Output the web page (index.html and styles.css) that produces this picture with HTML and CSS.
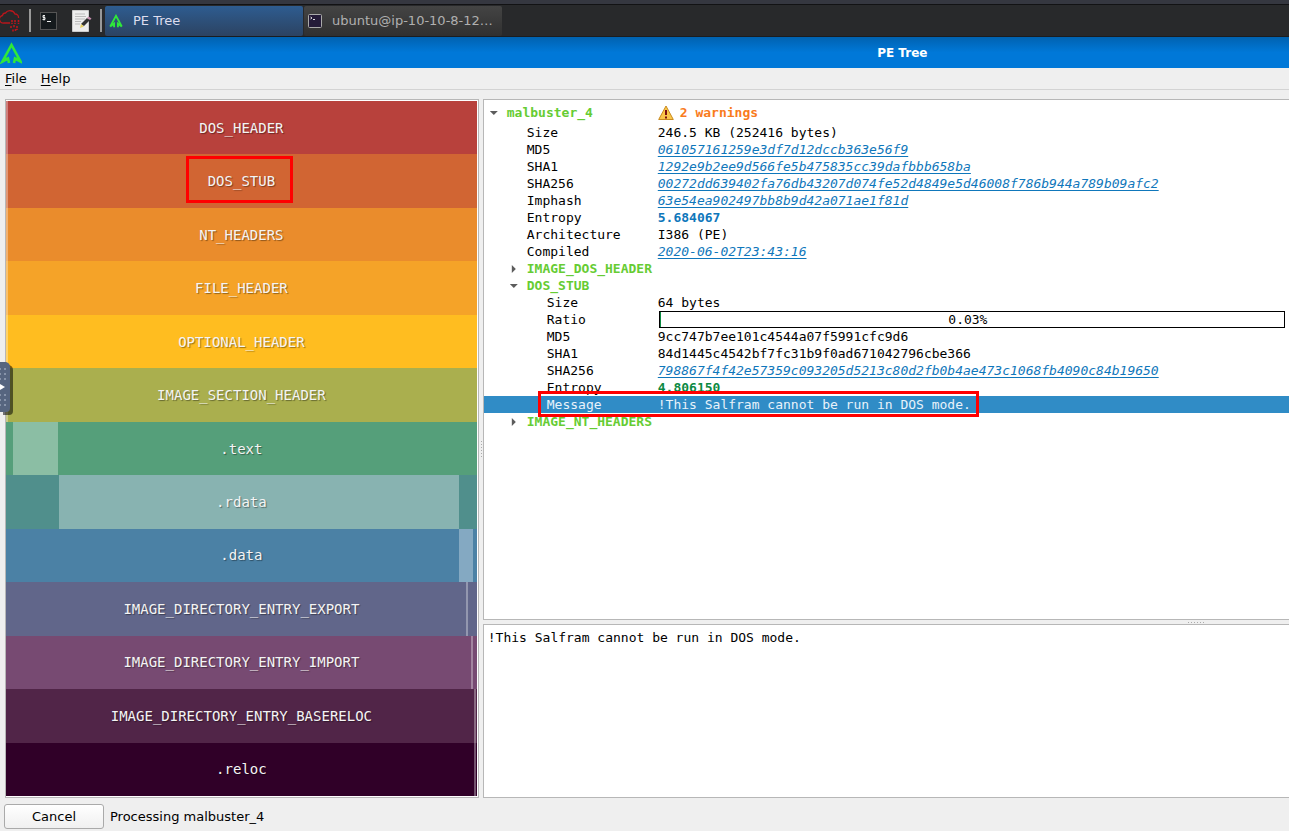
FILE: index.html
```html
<!DOCTYPE html>
<html lang="en">
<head>
<meta charset="utf-8">
<title>PE Tree</title>
<link rel="stylesheet" href="styles.css">
</head>
<body>
<div class="edge"></div>
<nav class="taskbar">
  <button class="launcher cloud" aria-label="TryHackMe">
    <svg width="21" height="24" viewBox="0 0 21 24" fill="none" stroke="#b8161c" stroke-width="1.300"><path d="M10 14H4a3.800 3.800 0 0 1-1.500-7.500 3 3 0 0 1 3-2.500 5.500 5.500 0 0 1 9.500 1 3.500 3.500 0 0 1 3.500 4"/><path d="M12 11v4M15 11v4M18.500 11v4M11 17v2M14 16v3M17 17v4M13 20.500v2M15.500 20v2" stroke-dasharray="2 .7" stroke-width="1.600"/></svg>
  </button>
  <span class="sep"></span>
  <button class="launcher term" aria-label="Terminal">
    <svg width="17" height="18" viewBox="0 0 17 18"><rect x=".5" y=".5" width="16" height="17" fill="#151a1d" stroke="#555"/><path d="M5 3.500H3v2h2v2H2.500M4 3v5.500M7 9.500h4" fill="none" stroke="#eee"/></svg>
  </button>
  <button class="launcher note" aria-label="Text editor">
    <svg width="20" height="22" viewBox="0 0 20 22"><path d="M.5.5h16v21H.5z" fill="#eee" stroke="#ccc"/><path d="M3 4h10M3 6.500h11M3 9h10M3 11.500h6M3 14h5" stroke="#bbb"/><path d="M9 14l6-6 3 2-6 6z" fill="#333"/><path d="M15 8l1.500-1.500 3 2L18 10z" fill="#c890b0"/><path d="M9 14l3 2.500-4 1.500z" fill="#e8d060"/></svg>
  </button>
  <span class="sep"></span>
  <button class="task active">
    <svg width="14" height="14" viewBox="0 0 22 22" fill="none" stroke="#2fe83a" stroke-width="3"><path d="M8 21V15L2 19.500 11 3l9 16.500-6-4.500v6"/></svg>
    <span>PE Tree</span>
  </button>
  <button class="task">
    <svg width="14" height="14" viewBox="0 0 14 14"><rect x=".5" y=".5" width="13" height="13" rx="1" fill="#241b38" stroke="#aaa"/><path d="M2.500 3l1.500 1-1.500 1M5 5.500h2" fill="none" stroke="#ddd"/></svg>
    <span>ubuntu@ip-10-10-8-12…</span>
  </button>
</nav>
<header class="titlebar">
  <svg width="22" height="22" viewBox="0 0 22 22" fill="none" stroke="#2fe83a" stroke-width="2.600"><path d="M9 21L8 16.500 2.500 19.500 11.500 3l9 16.500L15 16.500 14 21M3 19.500l4-3M20 19.500l-4-3"/></svg>
  <h1>PE Tree</h1>
</header>
<div class="menubar"><button><u>F</u>ile</button><button><u>H</u>elp</button></div>
<main class="content">
  <section class="map">
    <div class="region r1 lead">DOS_HEADER</div>
    <div class="region r2 lead"><span class="marked">DOS_STUB</span></div>
    <div class="region r3 lead">NT_HEADERS</div>
    <div class="region r4 lead">FILE_HEADER</div>
    <div class="region r5 lead">OPTIONAL_HEADER</div>
    <div class="region r6 lead">IMAGE_SECTION_HEADER</div>
    <div class="region r7"><i class="part" style="left:1.5%;width:9.5%"></i><span>.text</span></div>
    <div class="region r8"><i class="part" style="left:11.3%;width:84.9%"></i><span>.rdata</span></div>
    <div class="region r9"><i class="part" style="left:96.2%;width:2.9%"></i><span>.data</span></div>
    <div class="region r10"><i class="part" style="left:97.7%;width:2px"></i><span>IMAGE_DIRECTORY_ENTRY_EXPORT</span></div>
    <div class="region r11"><i class="part" style="left:98.8%;width:2px"></i><span>IMAGE_DIRECTORY_ENTRY_IMPORT</span></div>
    <div class="region r12"><i class="part" style="left:99.4%;width:2px"></i><span>IMAGE_DIRECTORY_ENTRY_BASERELOC</span></div>
    <div class="region r13"><i class="part" style="left:99.4%;width:2px"></i><span>.reloc</span></div>
  </section>
  <div class="split vertical"></div>
  <div class="right">
    <section class="details">
      <table class="tree">
        <tbody>
        <tr class="root"><th class="group"><i class="arrow open"></i>malbuster_4</th><td class="warn"><svg width="16" height="16" viewBox="0 0 16 16"><path d="M8 1L15.300 14.500H.7z" fill="#fbc64a" stroke="#c98a1e" stroke-linejoin="round"/><path d="M8 5v5M8 11.500v2" stroke="#7c1010" stroke-width="2"/></svg>2 warnings</td></tr>
        <tr><th class="l1">Size</th><td>246.5 KB (252416 bytes)</td></tr>
        <tr><th class="l1">MD5</th><td><a href="#">061057161259e3df7d12dccb363e56f9</a></td></tr>
        <tr><th class="l1">SHA1</th><td><a href="#">1292e9b2ee9d566fe5b475835cc39dafbbb658ba</a></td></tr>
        <tr><th class="l1">SHA256</th><td><a href="#">00272dd639402fa76db43207d074fe52d4849e5d46008f786b944a789b09afc2</a></td></tr>
        <tr><th class="l1">Imphash</th><td><a href="#">63e54ea902497bb8b9d42a071ae1f81d</a></td></tr>
        <tr><th class="l1">Entropy</th><td class="blue">5.684067</td></tr>
        <tr><th class="l1">Architecture</th><td>I386 (PE)</td></tr>
        <tr><th class="l1">Compiled</th><td><a href="#">2020-06-02T23:43:16</a></td></tr>
        <tr><th class="l1 group"><i class="arrow"></i>IMAGE_DOS_HEADER</th><td></td></tr>
        <tr><th class="l1 group"><i class="arrow open"></i>DOS_STUB</th><td></td></tr>
        <tr><th class="l2">Size</th><td>64 bytes</td></tr>
        <tr><th class="l2">Ratio</th><td><div class="ratio">0.03%</div></td></tr>
        <tr><th class="l2">MD5</th><td>9cc747b7ee101c4544a07f5991cfc9d6</td></tr>
        <tr><th class="l2">SHA1</th><td>84d1445c4542bf7fc31b9f0ad671042796cbe366</td></tr>
        <tr><th class="l2">SHA256</th><td><a href="#">798867f4f42e57359c093205d5213c80d2fb0b4ae473c1068fb4090c84b19650</a></td></tr>
        <tr><th class="l2">Entropy</th><td class="green">4.806150</td></tr>
        <tr class="selected"><th class="l2"><i class="mark"></i>Message</th><td>!This Salfram cannot be run in DOS mode.</td></tr>
        <tr><th class="l1 group"><i class="arrow"></i>IMAGE_NT_HEADERS</th><td></td></tr>
        </tbody>
      </table>
    </section>
    <div class="split horizontal"></div>
    <textarea class="output" aria-label="Value" spellcheck="false">!This Salfram cannot be run in DOS mode.</textarea>
  </div>
</main>
<footer class="status"><button>Cancel</button><span>Processing malbuster_4</span></footer>
<button class="drawer" aria-label="Open panel">
  <svg width="11" height="51" viewBox="0 0 11 51"><path d="M0 0h6q4 1 4 5v41q0 4-4 4H0z" fill="#56657f"/><path d="M0 7h1M4 7h2M0 12h1M4 12h2M0 17h1M4 17h2M0 33h1M4 33h2M0 38h1M4 38h2M0 43h1M4 43h2" stroke="#8794aa" stroke-width="2"/><path d="M0 22l5 3-5 3z" fill="#fff"/></svg>
</button>
</body>
</html>
```
FILE: styles.css
```css
* { box-sizing: border-box; }
body {
  margin: 0;
  height: 100vh;
  display: flex;
  flex-direction: column;
  overflow: hidden;
  position: relative;
  background: #efefef;
  color: #000;
  font-family: "DejaVu Sans", sans-serif;
  font-size: 13px;
}
button {
  font: inherit;
  color: inherit;
  padding: 0;
  border: 0;
  background: none;
}
svg { display: block; flex: none; }
.edge { flex: none; height: 4px; background: #353740; }
.taskbar {
  flex: none;
  height: 33px;
  display: flex;
  align-items: center;
  background: #28292b;
  border-top: 1px solid #121214;
  border-bottom: 1px solid #1b1d20;
}
.sep { width: 2px; height: 23px; margin-left: 8px; background: #999; }
.term { margin-left: 9px; }
.note { margin-left: 15px; }
.task {
  width: 198px;
  height: 30px;
  margin-left: 1px;
  padding: 0 4px;
  display: flex;
  align-items: center;
  gap: 10px;
  border-radius: 2px;
  background: linear-gradient(#444, #303030);
  color: #b0b0b0;
}
.task.active { margin-left: 3px; background: linear-gradient(#2e5c90, #2c4362); color: #dde; }
.titlebar {
  flex: none;
  height: 31px;
  display: grid;
  align-items: center;
  background: linear-gradient(#0062b0, #0078d8 50%);
  color: #fff;
}
.titlebar > * { grid-area: 1 / 1; }
.titlebar h1 { margin: 0; padding-left: 40%; font-size: 12px; text-align: center; }
.menubar {
  flex: none;
  height: 22px;
  display: flex;
  align-items: center;
  gap: 14px;
  padding-left: 5px;
  border-bottom: 1px solid #d3d3d3;
}
.menubar u { text-underline-offset: 2px; }
.content { flex: 1; min-height: 0; display: flex; padding: 9px 0 0 5px; }
.map {
  width: 36.9%;
  flex: none;
  display: flex;
  flex-direction: column;
  padding: 1px 1px 1px 0;
  border: 1px solid #b7b7b7;
  background: #fff;
}
.region {
  flex: 1;
  position: relative;
  display: flex;
  align-items: center;
  justify-content: center;
  font-family: "DejaVu Sans Mono", monospace;
  font-size: 14px;
  color: #f4f4f4;
  text-shadow: 1px 1px 1px #0006;
}
.region span { position: relative; }
.lead { box-shadow: inset 2px 0 #ffffff55; }
.part { position: absolute; top: 0; bottom: 0; background: #ffffff52; }
.r1 { background: #b8413c; }
.r2 { background: #d16533; }
.r3 { background: #ea8c2c; }
.r4 { background: #f5a328; }
.r5 { background: #ffbd20; }
.r6 { background: #aaaf4e; }
.r7 { background: #559f7a; }
.r8 { background: #508f8c; }
.r9 { background: #4b81a5; }
.r10 { background: #61668a; }
.r11 { background: #774a72; }
.r12 { background: #512548; }
.r13 { background: #300028; }
.marked::after {
  content: "";
  position: absolute;
  inset: -17px -18px -14px -22px;
  border: 3px solid #f00;
}
.split { flex: none; display: flex; align-items: center; }
.vertical { width: 4px; }
.vertical::after { content: ""; width: 1px; height: 16px; margin-left: 2px; background: repeating-linear-gradient(#aaa 0 1px, transparent 1px 3px); }
.right { flex: 1; min-width: 0; display: flex; flex-direction: column; }
.details {
  flex: 19;
  min-height: 0;
  border: 1px solid #b7b7b7;
  border-right: 0;
  background: #fff;
  padding-top: 1px;
}
.tree {
  width: 100%;
  table-layout: fixed;
  border-collapse: collapse;
  font-family: "DejaVu Sans Mono", monospace;
  line-height: 17px;
}
.tree th { width: 174px; padding: 0 0 0 23px; font-weight: 400; text-align: left; position: relative; white-space: nowrap; }
.tree td { padding: 0 4px 0 0; }
.tree tr { height: 17px; }
.tree .root { height: 23px; }
.tree .l1 { padding-left: 43px; }
.tree .l2 { padding-left: 63px; }
.tree .group { color: #66cc33; font-weight: 700; }
.tree a { color: #0f77bb; font-style: italic; text-underline-offset: 2px; }
.arrow {
  display: inline-block;
  width: 8px;
  height: 8px;
  margin: 0 9px 0 -17px;
  background: #5c5c5c;
  clip-path: polygon(25% 0, 75% 50%, 25% 100%);
}
.arrow.open { clip-path: polygon(0 25%, 100% 25%, 50% 75%); }
.tree .warn { display: flex; align-items: center; gap: 6px; height: 23px; color: #f97b1c; font-weight: 700; }
.tree .blue { color: #0f77bb; font-weight: 700; }
.tree .green { color: #0c8a43; font-weight: 700; }
.ratio {
  height: 17px;
  margin-left: 1px;
  padding-right: 8px;
  border: 1px solid #000;
  box-shadow: inset 1px 0 #0c8a43;
  line-height: 15px;
  text-align: center;
}
.selected { background: #308cc6; color: #e8f2fa; }
.mark {
  position: absolute;
  z-index: 1;
  left: 54px;
  top: -5px;
  width: 441px;
  height: 26px;
  border: 3px solid #f00;
}
.horizontal { height: 4px; }
.horizontal::after { content: ""; width: 16px; height: 1px; margin-left: 87.5%; background: repeating-linear-gradient(90deg, #aaa 0 1px, transparent 1px 3px); }
.output {
  flex: 6;
  min-height: 0;
  width: 100%;
  margin: 0;
  padding: 4px;
  border: 1px solid #b7b7b7;
  border-right: 0;
  background: #fff;
  color: #000;
  resize: none;
  font: 13px/17px "DejaVu Sans Mono", monospace;
}
.status { flex: none; height: 33px; display: flex; align-items: center; gap: 6px; padding: 4px 4px 0; }
.status button {
  width: 100px;
  height: 25px;
  border: 1px solid #aaa;
  border-radius: 3px;
  background: linear-gradient(#fff, #f0f0f0);
}
.drawer { position: absolute; left: 0; top: 362px; filter: drop-shadow(3px 3px 0 #0008); }
```
